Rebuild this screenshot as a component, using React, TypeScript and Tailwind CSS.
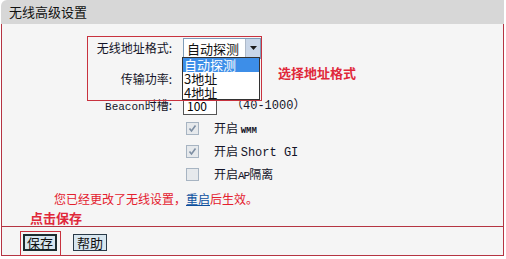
import React from 'react';

const cjk = "font-['Noto_Sans_CJK_SC',sans-serif]";
const mono = "font-['Liberation_Mono','Noto_Sans_CJK_SC',monospace]";

function Check({ checked }: { checked: boolean }) {
  return (
    <div className="w-[13px] h-[13px] border border-[#a7b4c2] bg-[#e6e9ec] flex items-center justify-center">
      {checked && (
        <svg width="9" height="9" viewBox="0 0 9 9">
          <path d="M1.5 4.5 L3.5 7 L7.5 1.5" fill="none" stroke="#7d8ea3" strokeWidth="1.6" />
        </svg>
      )}
    </div>
  );
}

function CheckRow({ checked, children }: { checked: boolean; children: React.ReactNode }) {
  return (
    <div className="h-[23px] flex items-center pl-[184px]">
      <Check checked={checked} />
      <span className="ml-[15px] text-[12px] text-[#141428]">{children}</span>
    </div>
  );
}

export default function App() {
  return (
    <div className={`w-[506px] h-[259px] bg-white ${cjk} relative`}>
      <div className="ml-[1px] w-[503px]">
        {/* Header */}
        <div className="h-[24px] bg-[#d7d7d7] rounded-tl-[6px] flex items-center pl-[8px] text-[13px] text-[#111]">
          无线高级设置
        </div>

        {/* Body */}
        <div className="border-x border-[#b53442] bg-[#f5f5f5] pt-[11px]">
          <div className="h-[26px] grid grid-cols-[170px_1fr] gap-x-[11px] items-center">
            <div className="text-right text-[12px] text-[#141428]">无线地址格式:</div>
            <div className="w-[78px] h-[21px] bg-white border border-[#7f9db9] flex items-center">
              <span className="flex-1 pl-[3px] text-[13px] text-[#111] leading-none">自动探测</span>
              <div className="w-[15px] h-[19px] bg-[#c9d6e8] border-l border-[#aeb9c8] flex items-center justify-center">
                <svg width="7" height="4" viewBox="0 0 7 4"><path d="M0 0 H7 L3.5 4 Z" fill="#1a1a1a" /></svg>
              </div>
            </div>
          </div>
          <div className="mt-[5px] h-[26px] grid grid-cols-[170px_1fr] gap-x-[11px] items-center">
            <div className="text-right text-[12px] text-[#141428]">传输功率:</div>
            <div />
          </div>
          <div className="mt-[3px] h-[22px] grid grid-cols-[170px_1fr] gap-x-[11px] items-center">
            <div className="text-right text-[12px] text-[#141428]">
              <span className={`${mono} text-[11px]`}>Beacon</span>时槽:
            </div>
            <div className="flex items-center">
              <div className="w-[34px] h-[17px] bg-white border border-[#555] flex items-center pl-[3px] text-[12px] leading-none">100</div>
              <span className={`ml-[14px] text-[12px] text-[#141428] ${mono}`}>（40-1000）</span>
            </div>
          </div>
          <CheckRow checked>开启 <span className={`${mono} font-bold text-[9px]`}>WMM</span></CheckRow>
          <CheckRow checked>开启 <span className={`${mono} text-[12px]`}>Short GI</span></CheckRow>
          <CheckRow checked={false}>开启<span className={`${mono} text-[11px] tracking-[-1px]`}>AP</span>隔离</CheckRow>
          <div className="mt-[2px] h-[22px] flex items-center pl-[52px] text-[12px] text-[#e4202e]">
            您已经更改了无线设置，<span className="text-[#0c4f9e] underline">重启</span>后生效。
          </div>
          <div className="h-[16px] flex items-center pl-[28px] text-[13px] font-bold text-[#e0283a]">点击保存</div>
        </div>

        {/* Footer */}
        <div className="border border-[#b53442] bg-[#f5f5f5] h-[30px] flex items-start pt-[7px] pl-[21px] gap-[16px]">
          <button className="w-[34px] h-[17px] border-2 border-[#1c2c30] bg-[#d8e6ef] text-[13px] leading-none text-[#111] flex items-center justify-center">保存</button>
          <button className="w-[34px] h-[17px] border border-[#2a3a48] bg-[#d8e6ef] text-[13px] leading-none text-[#111] flex items-center justify-center">帮助</button>
        </div>
      </div>

      {/* Dropdown list (open) */}
      <div className="absolute left-[182px] top-[57px] w-[78px] h-[43px] bg-white border border-[#333] text-[13px] leading-[14px]">
        <div className="bg-[#3d8ee8] text-white pl-[1px]">自动探测</div>
        <div className="pl-[1px] text-[#111]">3地址</div>
        <div className="pl-[1px] text-[#111]">4地址</div>
      </div>

      {/* Annotations */}
      <div className="absolute left-[87px] top-[36px] w-[175px] h-[65px] border border-[#c8323e]" />
      <div className="absolute left-[278px] top-[63px] text-[13px] font-bold text-[#e0283a]">选择地址格式</div>
      <div className="absolute left-[20px] top-[231px] w-[41px] h-[25px] border border-[#c8323e]" />
    </div>
  );
}
